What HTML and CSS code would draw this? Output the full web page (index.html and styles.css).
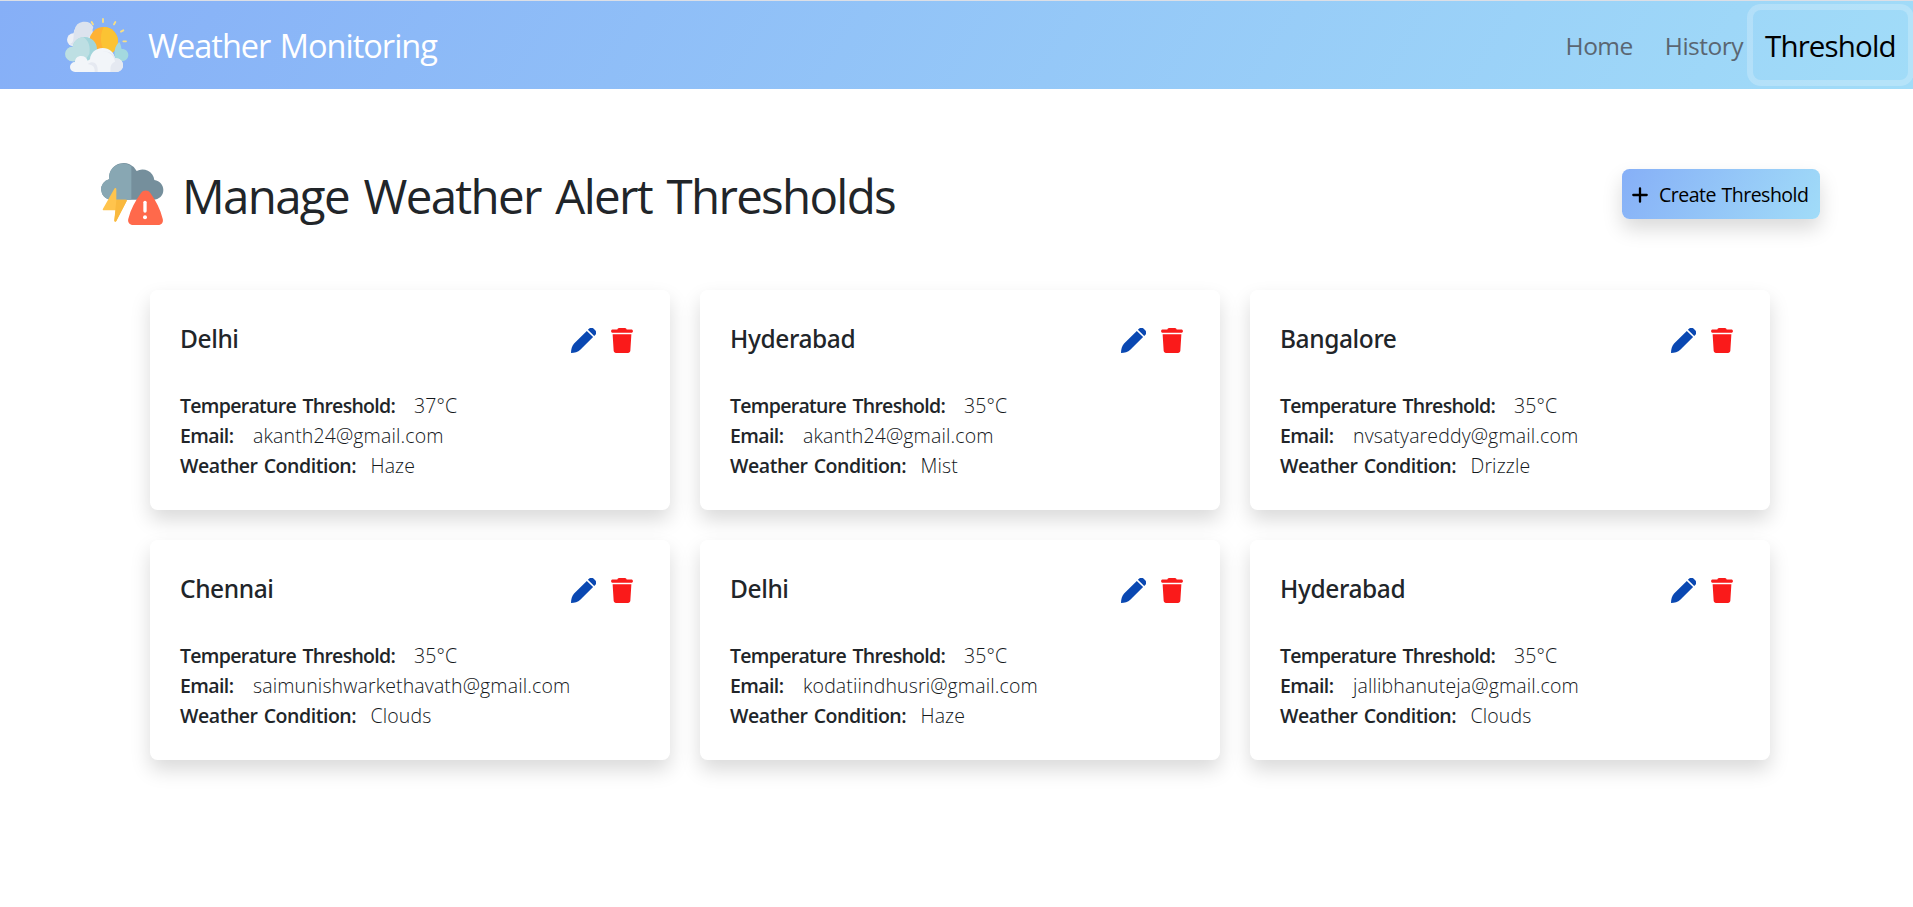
FILE: index.html
```
<!DOCTYPE html>
<html lang="en">
<head>
<meta charset="utf-8">
<title>Weather Monitoring</title>
<link rel="stylesheet" href="styles.css">
</head>
<body>
<svg class="defs" width="0" height="0" aria-hidden="true">
  <symbol id="pen" viewBox="0 0 25 25"><path d="M16.9 1.8 18 .8a3.4 3.4 0 0 1 4.700 0l1.500 1.500a3.400 3.400 0 0 1 0 4.700l-1 1zM15.800 2.900 22.100 9.100 9.300 21.700C7 24 3.500 25 0 25 .1 21.500.9 17.700 3.100 15.500z"/></symbol>
  <symbol id="trash" viewBox="0 0 448 512"><path d="M135.200 17.700 128 32H32C14.300 32 0 46.300 0 64s14.300 32 32 32h384c17.700 0 32-14.300 32-32s-14.300-32-32-32h-96l-7.200-14.300C307.400 6.800 296.300 0 284.200 0H163.800c-12.100 0-23.200 6.800-28.600 17.700zM416 128H32l21.200 339c1.600 25.300 22.600 45 47.900 45h245.800c25.300 0 46.300-19.700 47.900-45z"/></symbol>
</svg>
<nav class="navbar">
  <a class="brand">
    <svg class="brand-icon" viewBox="0 0 222 210">
      <g stroke="#f7df86" stroke-width="5.500" stroke-linecap="round"><path d="M129 27v9M95 36l4 7M166 36l-4 7M190 61l-7 4M190 94h8"/></g>
      <g fill="#edf0f6"><circle cx="70" cy="73" r="30"/><circle cx="40" cy="89" r="19"/></g>
      <path d="M44 60a30 30 0 0 1 56-9l-8 26-40 30-25-5c20 0 10-29 17-42z" fill="#dce3ee"/>
      <circle cx="131" cy="94" r="43" fill="#ffb233"/>
      <path d="M131 51a43 43 0 0 1 43 43c-1 21-16 37-30 42-24-20-27-58-13-85z" fill="#fbc333"/>
      <path d="M170 154c-12-20-6-48 8-58 5 7 5 17 7 21 13 0 20 8 20 18s-9 19-20 19z" fill="#a4d9df"/>
      <path d="M37 154a22 22 0 0 1 1-44c4-18 18-29 36-29 22 0 38 17 37 39l-20 34z" fill="#a2d5db"/>
      <path d="M37 154a22 22 0 0 1 1-44c3-15 14-27 31-29 17 9 23 30 19 51l-14 22z" fill="#bddfe3"/>
      <path d="M45 186a15 15 0 0 1 0-30c0-12 9-18 18-18 11 0 17 6 20 14l7-4c1-19 17-34 38-34 20 0 35 13 37 31 14-1 24 8 24 21 0 12-9 20-20 20z" fill="#f2f5f9"/>
      <path d="M90 158c12-4 25 3 23 28h-9c1-14-4-21-21-24zM128 124c20 0 35 13 37 31-18 8-12 22-14 31h18c11 0 20-8 20-20 0-13-10-22-24-21-2-13-17-21-37-21z" fill="#e5e9f1"/>
    </svg>
    <span class="brand-name">Weather Monitoring</span>
  </a>
  <div class="links">
    <a class="link">Home</a>
    <a class="link">History</a>
    <a class="link active">Threshold</a>
  </div>
</nav>
<main>
  <header class="page-head">
    <div class="heading">
      <svg class="storm" viewBox="0 0 228 228">
        <path d="M50 131a31 31 0 0 1-5-61v-3a44 44 0 0 1 83-22 36 36 0 0 1 53 27c17 3 27 15 27 30 0 17-13 29-30 29z" fill="#758f9c"/>
        <path d="M50 131a31 31 0 0 1-5-61v-3a43 43 0 0 1 67-37v101z" fill="#88a7b3"/>
        <path d="M61 98c2-4 6-2 6 1v32h28c3 0 4 2 3 4l-31 60c-2 4-7 2-6-2l4-30H30c-3 0-5-2-3-5z" fill="#ffc44d"/>
        <path d="M67 131h28c3 0 4 2 3 4l-31 60c-2 4-7 2-6-2z" fill="#f9b93e"/>
        <path d="M141 111c6-10 22-10 28 0 17 24 30 49 37 77 3 10-3 19-14 19h-74c-11 0-18-9-15-19 7-28 21-53 38-77z" fill="#ff694b"/>
        <path d="M153 139v26" stroke="#fff" stroke-width="10" stroke-linecap="round"/><circle cx="153" cy="184" r="6" fill="#fff"/>
      </svg>
      <h1>Manage Weather Alert Thresholds</h1>
    </div>
    <button class="create"><svg class="plus" viewBox="0 0 16 16"><path d="M8 1.300v13.400M1.300 8h13.400" stroke="#000" stroke-width="2.300" stroke-linecap="round"/></svg><span>Create Threshold</span></button>
  </header>
  <section class="grid">
    <article class="card"><div class="card-head"><h2>Delhi</h2><div class="actions"><svg class="pen"><use href="#pen"/></svg><svg class="trash"><use href="#trash"/></svg></div></div>
      <p><b class="temp">Temperature Threshold:</b><span>37°C</span></p><p><b class="email">Email:</b><span>akanth24@gmail.com</span></p><p><b class="cond">Weather Condition:</b><span>Haze</span></p></article>
    <article class="card"><div class="card-head"><h2>Hyderabad</h2><div class="actions"><svg class="pen"><use href="#pen"/></svg><svg class="trash"><use href="#trash"/></svg></div></div>
      <p><b class="temp">Temperature Threshold:</b><span>35°C</span></p><p><b class="email">Email:</b><span>akanth24@gmail.com</span></p><p><b class="cond">Weather Condition:</b><span>Mist</span></p></article>
    <article class="card"><div class="card-head"><h2>Bangalore</h2><div class="actions"><svg class="pen"><use href="#pen"/></svg><svg class="trash"><use href="#trash"/></svg></div></div>
      <p><b class="temp">Temperature Threshold:</b><span>35°C</span></p><p><b class="email">Email:</b><span>nvsatyareddy@gmail.com</span></p><p><b class="cond">Weather Condition:</b><span>Drizzle</span></p></article>
    <article class="card"><div class="card-head"><h2>Chennai</h2><div class="actions"><svg class="pen"><use href="#pen"/></svg><svg class="trash"><use href="#trash"/></svg></div></div>
      <p><b class="temp">Temperature Threshold:</b><span>35°C</span></p><p><b class="email">Email:</b><span>saimunishwarkethavath@gmail.com</span></p><p><b class="cond">Weather Condition:</b><span>Clouds</span></p></article>
    <article class="card"><div class="card-head"><h2>Delhi</h2><div class="actions"><svg class="pen"><use href="#pen"/></svg><svg class="trash"><use href="#trash"/></svg></div></div>
      <p><b class="temp">Temperature Threshold:</b><span>35°C</span></p><p><b class="email">Email:</b><span>kodatiindhusri@gmail.com</span></p><p><b class="cond">Weather Condition:</b><span>Haze</span></p></article>
    <article class="card"><div class="card-head"><h2>Hyderabad</h2><div class="actions"><svg class="pen"><use href="#pen"/></svg><svg class="trash"><use href="#trash"/></svg></div></div>
      <p><b class="temp">Temperature Threshold:</b><span>35°C</span></p><p><b class="email">Email:</b><span>jallibhanuteja@gmail.com</span></p><p><b class="cond">Weather Condition:</b><span>Clouds</span></p></article>
  </section>
</main>
</body>
</html>
```
FILE: styles.css
```
* { box-sizing: border-box; }
body {
  margin: 0;
  min-height: 100vh;
  background: #fff;
  color: #212529;
  font-family: "Segoe UI", "Open Sans", "Noto Sans", sans-serif;
  font-size: 19.5px;
  line-height: 30px;
}
h1, h2, p { margin: 0; }
svg { display: block; flex: none; }
.defs { position: absolute; }

.navbar {
  display: flex;
  justify-content: space-between;
  height: 89px;
  padding-left: 60px;
  border-top: 1px solid #dcdfe6;
  background: linear-gradient(120deg, #86aff7, #a1dcf8);
}
.brand { display: flex; align-items: flex-start; }
.brand-icon { width: 74px; height: 70px; margin-top: 9px; }
.brand-name {
  margin: 23px 0 0 14px;
  color: #fff;
  font-size: 32.5px;
  line-height: 44px;
  letter-spacing: -1px;
  word-spacing: 2px;
}
.links { display: flex; align-items: flex-start; padding-top: 9px; }
.link {
  margin-right: 32px;
  padding-top: 21px;
  color: #5a6672;
  font-size: 24.5px;
  letter-spacing: -.5px;
}
.link.active {
  width: 155px;
  height: 70px;
  margin: 0 5px 0 -22px;
  padding: 21px 0 0 12px;
  border-radius: 8px;
  box-shadow: 0 0 0 6px rgba(255, 255, 255, .22);
  color: #000;
  font-size: 29.5px;
  letter-spacing: -.85px;
}

.page-head {
  display: flex;
  justify-content: space-between;
  align-items: flex-start;
  padding: 67px 93px 0 94px;
}
.heading { display: flex; }
.storm { width: 76px; height: 76px; }
h1 {
  margin: 8px 0 0 12px;
  font-size: 47.5px;
  font-weight: 400;
  line-height: 64px;
  letter-spacing: -1.7px;
  word-spacing: 4px;
}
.create {
  display: flex;
  align-items: center;
  width: 198px;
  height: 50px;
  margin-top: 13px;
  padding: 0 0 0 11px;
  border: 0;
  border-radius: 7.5px;
  background: linear-gradient(120deg, #86aff7, #a1dcf8);
  box-shadow: 0 10px 20px rgba(0, 0, 0, .15);
  color: #000;
  font: 400 19.5px "Segoe UI", "Open Sans", sans-serif;
  letter-spacing: -.5px;
  word-spacing: 1px;
  white-space: nowrap;
}
.plus { width: 16px; height: 16px; margin: 2px 11px 0 -1px; }

.grid {
  display: grid;
  grid-template-columns: repeat(3, 520px);
  gap: 30px;
  padding: 58px 0 0 150px;
}
.card {
  height: 220px;
  padding: 30px;
  border-radius: 7.5px;
  background: #fff;
  box-shadow: 0 10px 20px rgba(0, 0, 0, .15);
}
.card-head {
  display: flex;
  align-items: center;
  justify-content: space-between;
  height: 40px;
  margin-bottom: 31px;
}
h2 {
  margin-top: -2px;
  font-family: "Segoe UI", "Noto Sans", sans-serif;
  font-size: 24.5px;
  font-weight: 500;
  line-height: 30px;
  letter-spacing: -.4px;
}
.actions { display: flex; gap: 15px; padding-right: 7px; }
.pen { width: 25px; height: 25px; fill: #0a48b2; }
.trash { width: 22px; height: 25px; fill: #fa1a1a; }
p { display: flex; white-space: nowrap; font-weight: 300; letter-spacing: .13px; }
p span { color: #14181c; }
b { font-weight: 600; }
.temp { width: 234px; letter-spacing: -.7px; word-spacing: 2px; }
.email { width: 73px; letter-spacing: -.6px; }
.cond { width: 190.5px; letter-spacing: -.45px; word-spacing: 1.5px; }
```
